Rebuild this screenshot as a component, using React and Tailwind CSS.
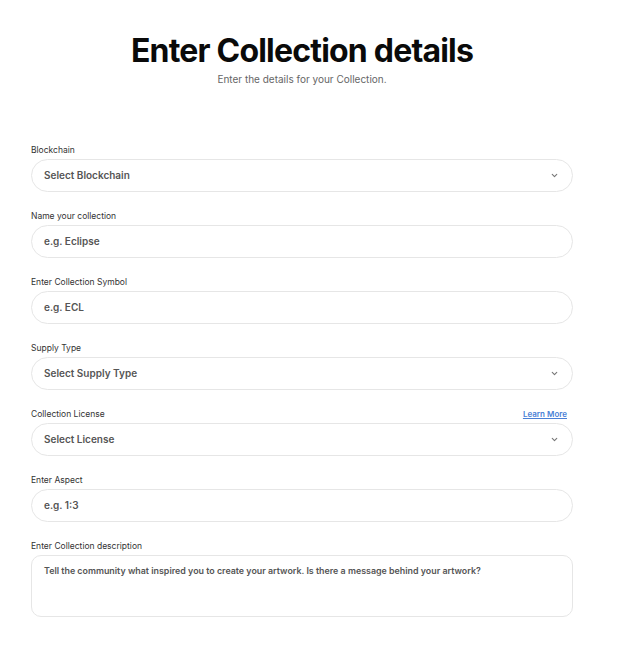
import React from 'react';

const Chevron = () => (
  <svg width="9" height="9" viewBox="0 0 24 24" fill="none" stroke="#777" strokeWidth="3" strokeLinecap="round" strokeLinejoin="round">
    <path d="M6 9l6 6 6-6" />
  </svg>
);

const Field = ({ label, placeholder, select, extra }) => (
  <div className="flex flex-col">
    <div className="flex justify-between items-end h-[12px] mb-[5px]">
      <span className="text-[8.5px] text-[#333] leading-none">{label}</span>
      {extra}
    </div>
    <div className="h-[33px] rounded-full border border-[#e6e6e6] bg-white flex items-center justify-between pl-[12px] pr-[13px]">
      <span className="text-[10px] font-semibold text-[#555]">{placeholder}</span>
      {select && <Chevron />}
    </div>
  </div>
);

export default function App() {
  return (
    <div className="min-h-screen bg-white px-[31px] pt-[31px]" style={{ fontFamily: "Inter, 'Noto Sans', sans-serif" }}>
      <div className="w-[542px]">
        <div className="flex flex-col items-center">
          <h1 className="text-[32px] font-bold tracking-tight text-[#0a0a0a] leading-tight">Enter Collection details</h1>
          <p className="text-[10px] text-[#666] mt-[1px]">Enter the details for your Collection.</p>
        </div>

        <div className="flex flex-col gap-[16px] mt-[55px]">
          <Field label="Blockchain" placeholder="Select Blockchain" select />
          <Field label="Name your collection" placeholder="e.g. Eclipse" />
          <Field label="Enter Collection Symbol" placeholder="e.g. ECL" />
          <Field label="Supply Type" placeholder="Select Supply Type" select />
          <Field
            label="Collection License"
            placeholder="Select License"
            select
            extra={<a href="#" className="text-[8px] font-semibold text-[#4a7fd6] underline mr-[6px] leading-none">Learn More</a>}
          />
          <Field label="Enter Aspect" placeholder="e.g. 1:3" />
          <div className="flex flex-col">
            <div className="h-[12px] mb-[5px] flex items-end">
              <span className="text-[8.5px] text-[#333] leading-none">Enter Collection description</span>
            </div>
            <div className="h-[62px] rounded-[10px] border border-[#e6e6e6] bg-white px-[12px] pt-[8px] text-[8.9px] leading-[14px] font-semibold text-[#555]">
              Tell the community what inspired you to create your artwork. Is there a message behind your artwork?
            </div>
          </div>
        </div>
      </div>
    </div>
  );
}
